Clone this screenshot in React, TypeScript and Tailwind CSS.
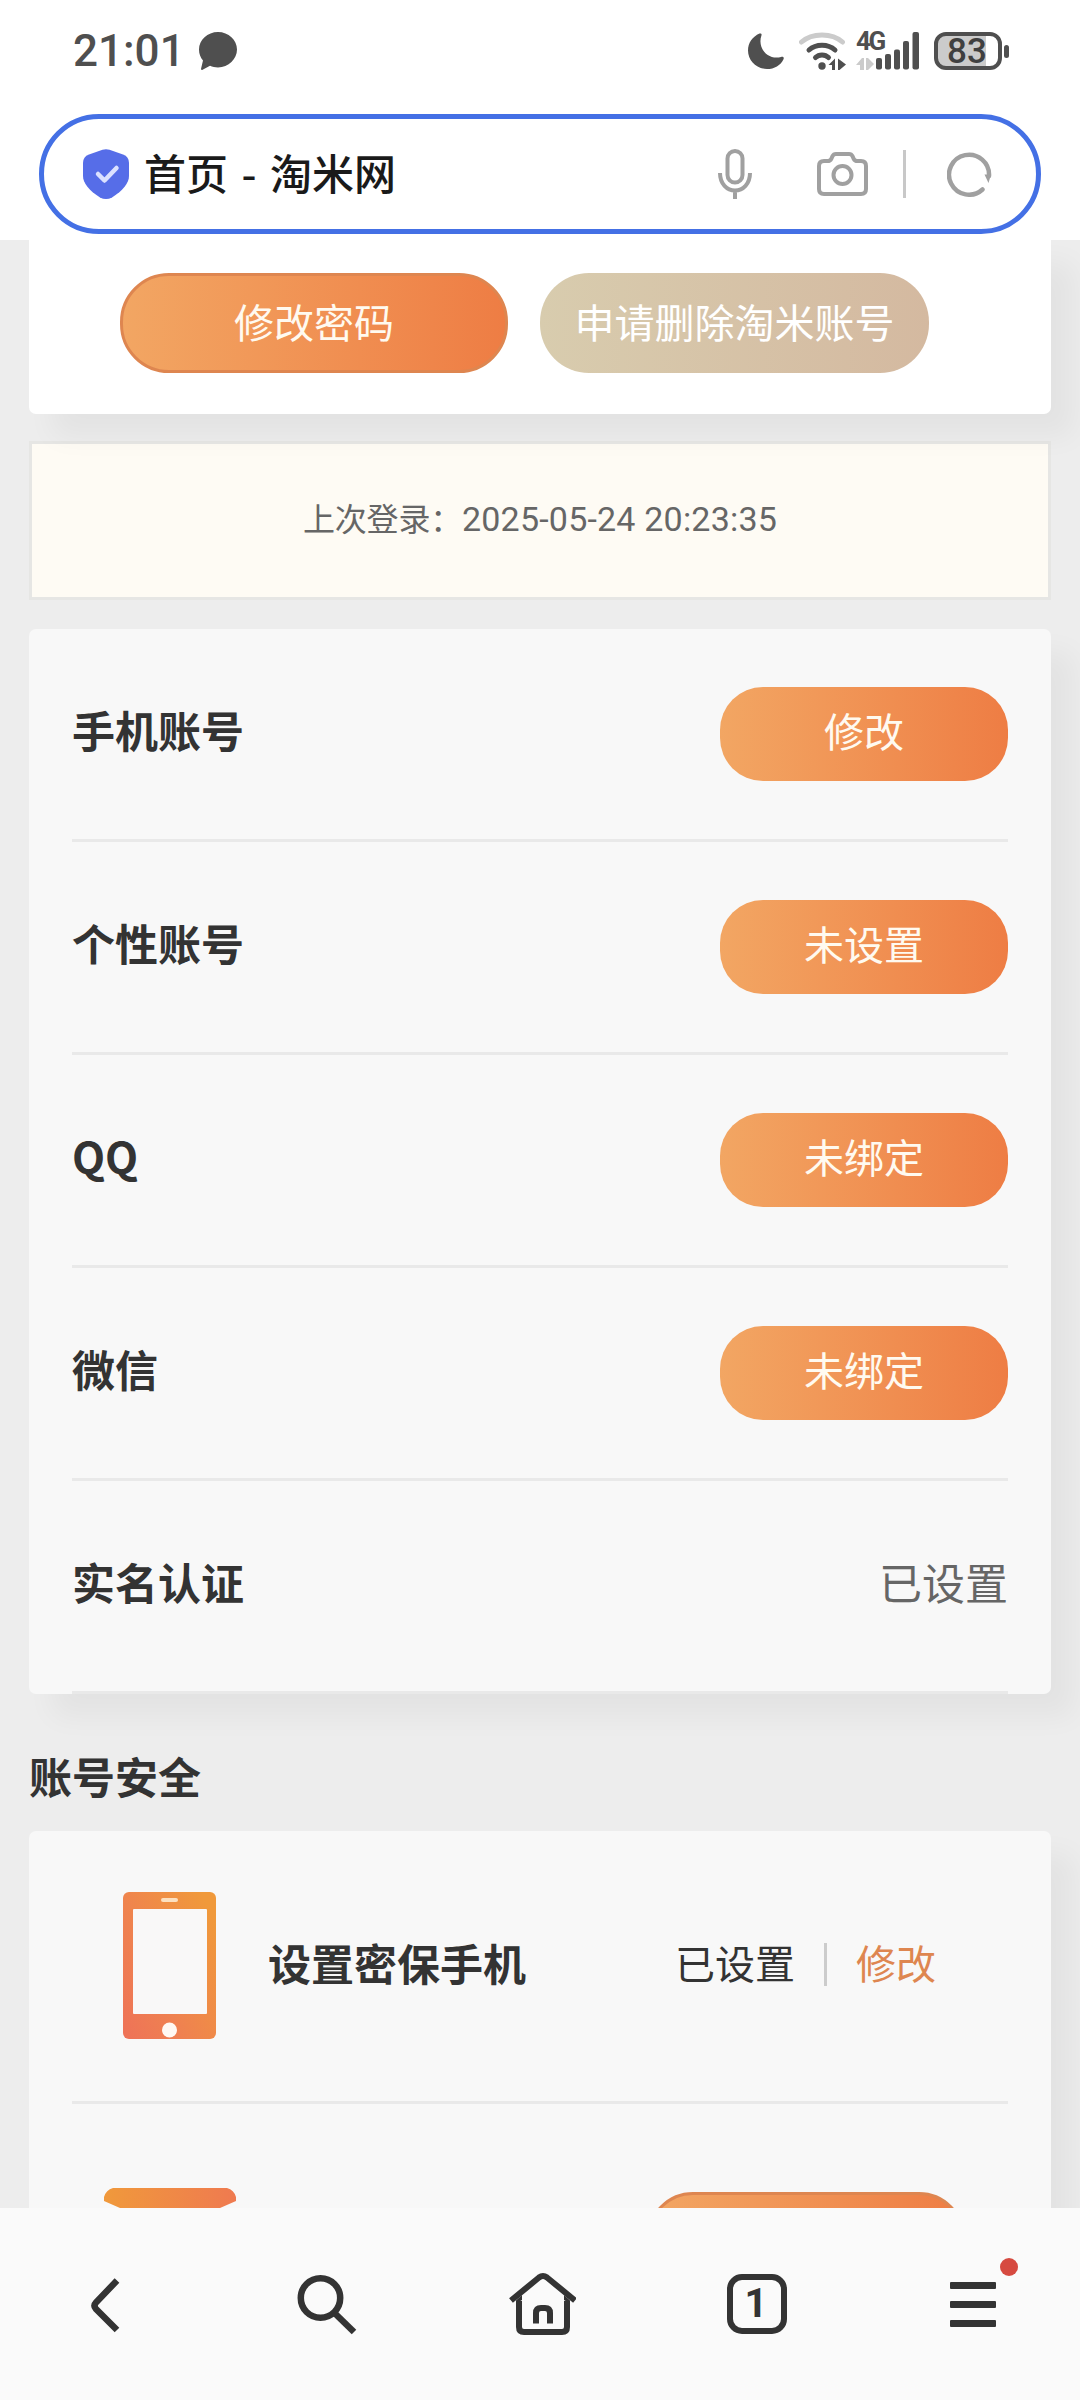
import type { ReactNode } from "react"
import clsx from "clsx"

type AccountRow = {
    label: string
    action?: string
    status?: string
}

const ACCOUNT_ROWS: AccountRow[] = [
    { label: "手机账号", action: "修改" },
    { label: "个性账号", action: "未设置" },
    { label: "QQ", action: "未绑定" },
    { label: "微信", action: "未绑定" },
    { label: "实名认证", status: "已设置" },
]

const CARD_SHADOW = "shadow-[23px_23px_29px_rgba(0,0,0,0.045)]"

const StatusBar = () => (
    <div className="flex h-[102px] items-center pl-[73px] pr-[71px] text-[#4f4f4f]">
        <span className="font-['Roboto'] text-[44px] font-medium leading-none">21:01</span>
        <svg className="ml-[14px] h-[38px] w-[38px]" viewBox="0 0 38 38" fill="currentColor">
            <path d="M19 0C29.500 0 38 8 38 17.500S29.500 35.500 19 35.500c-3 0-5.500-.6-8-1.700L3.600 37.700c-1 .5-1.800-.1-1.500-1.200L4 28.500C1.500 25.500 0 22 0 17.500 0 8 8.500 0 19 0Z" />
        </svg>

        {/* Moon */}
        <svg className="ml-auto h-9 w-9" viewBox="0 0 36 36" fill="currentColor">
            <path d="M11.500.6C12.800 0 14 1 13.500 2.300 9 14.500 19.500 27.500 33 24c2-.5 3.300.5 2.500 2.200C32.500 32.500 26.500 36 19 36 8.500 36 0 27.700 0 17.500 0 10 4.500 3.800 11.500.6Z" />
        </svg>

        {/* Wifi */}
        <svg className="ml-[15px] h-[38px] w-[47px]" viewBox="0 0 47 38" fill="none" strokeWidth="5" strokeLinecap="round">
            <path d="M2.500 10C13 .5 33 .5 43.500 10" stroke="#cbcbcb" />
            <path d="M10 18c7-6.500 19-6.500 26 0" stroke="currentColor" />
            <path d="M16.500 25.500c3.500-3.500 9.500-3.500 13 0" stroke="currentColor" />
            <circle cx="23" cy="34" r="3.700" fill="currentColor" />
            <path d="M29.500 33 36 26.500V38h-3v-5ZM39 26.500l8 6-6.500 5.500H39Z" fill="currentColor" />
        </svg>

        {/* 4G + signal */}
        <div className="ml-2.5 flex h-[38px] w-[64px] items-end">
            <div className="flex h-full w-[20px] flex-col justify-between">
                <span className="w-[30px] font-['Roboto'] text-[26px] font-bold leading-[19px] tracking-[-2.500px]">4G</span>
                <svg className="h-3 w-[18px]" viewBox="0 0 18 12" fill="#cbcbcb">
                    <path d="M0 7 6 0h2v12H4V7ZM10 0h2l6 6-6 6h-2Z" />
                </svg>
            </div>
            <svg className="h-[38px] w-[44px]" viewBox="0 0 44 38" fill="currentColor">
                <rect x="0" y="26" width="6" height="11.500" rx="2" />
                <rect x="9" y="22" width="6" height="15.500" rx="2" />
                <rect x="18" y="17.500" width="6" height="20" rx="2" />
                <rect x="27" y="9" width="6" height="28.500" rx="2" />
                <rect x="36.500" y="0" width="6.500" height="37.500" rx="2" />
            </svg>
        </div>

        {/* Battery */}
        <div className="ml-3.5 flex items-center gap-0.5">
            <div className="flex h-[38px] w-[68px] items-center justify-center rounded-[12px] border-4 border-[#4f4f4f] bg-linear-to-r from-[#cbcbcb] from-80% to-white to-80%">
                <span className="pr-0.5 font-['Roboto'] text-[35px] font-medium leading-none text-[#404040]">83</span>
            </div>
            <div className="h-[13px] w-[5px] rounded-sm bg-[#4f4f4f]" />
        </div>
    </div>
)

const AddressBar = () => (
    <div className="mx-[39px] mt-3 flex h-[120px] items-center rounded-full border-[5px] border-[#4470e5] bg-white pl-[39px] pr-[44px] text-[#a0a0a0]">
        <svg className="h-[50px] w-[46px]" viewBox="0 0 46 50">
            <path d="M19.500.8q3.500-1.200 7 0L40 5.500q6 2.200 6 8.500V27c0 7-6 14.500-17 21.500q-6 3-12 0C6 41.500 0 34 0 27V14Q0 7.700 6 5.500Z" fill="#566de8" />
            <path d="m15 25 6.500 6.500L33.500 19" fill="none" stroke="#dbe1ff" strokeWidth="4.500" strokeLinecap="round" strokeLinejoin="round" />
        </svg>
        <span className="ml-[15px] pb-1 text-[42px] font-medium leading-none text-[#1a1a1a] [word-spacing:4px]">首页 - 淘米网</span>

        <svg className="ml-auto h-[50px] w-[34px]" viewBox="0 0 34 50" fill="none" stroke="currentColor" strokeWidth="4">
            <rect x="9.500" y="2" width="15" height="31.500" rx="7.500" />
            <path d="M2 24c0 11 7 17.500 15 17.500S32 35 32 24M17 41.500V50" />
        </svg>
        <svg className="ml-[65px] h-[44px] w-[51px]" viewBox="0 0 51 44" fill="none" stroke="currentColor" strokeWidth="4" strokeLinejoin="round">
            <path d="M7 9h3.500c2 0 3-.5 3.800-2.200l1.200-2.600C16.300 2.500 17.300 2 19 2h13c1.700 0 2.700.5 3.500 2.200l1.200 2.600C37.500 8.500 38.500 9 40.500 9H44q5 0 5 5v23q0 5-5 5H7q-5 0-5-5V14q0-5 5-5Z" />
            <circle cx="25.500" cy="23" r="9" />
        </svg>
        <div className="ml-[35px] h-12 w-[3px] bg-[#c8c8c8]" />
        <svg className="ml-[41px] h-[45px] w-[45px]" viewBox="0 0 45 45" fill="none" stroke="currentColor" strokeWidth="4.500">
            <path d="M35.500 37.500A20 20 0 1 1 42 24" strokeLinecap="round" />
            <path d="M37.500 22.500h6.500l-2.500 8.500Z" fill="currentColor" stroke="none" />
        </svg>
    </div>
)

const PillButton = ({ children, className }: { children?: ReactNode; className?: string }) => (
    <button
        className={clsx(
            "flex items-center justify-center bg-linear-to-r from-[#f2a663] to-[#ee7d44] text-[40px] leading-none text-[#fffaf0]",
            className,
        )}
    >
        {children}
    </button>
)

const AccountItem = ({ row }: { row: AccountRow }) => (
    <li className="flex h-[213px] items-center justify-between border-b-[3px] border-[#e9e9e9]">
        <span className="pb-2.5 text-[43px] font-bold leading-none text-[#333]">{row.label}</span>
        {row.action ? (
            <PillButton className="h-[94px] w-[288px] rounded-[43px] pb-2">{row.action}</PillButton>
        ) : (
            <span className="pb-2.5 text-[43px] leading-none text-[#666]">{row.status}</span>
        )}
    </li>
)

const PhoneIcon = () => (
    <svg className="mb-px h-[147px] w-[93px]" viewBox="0 0 93 147">
        <defs>
            <linearGradient id="phone" x1="0" y1="1" x2="1" y2="0.200">
                <stop offset="0" stopColor="#ee7258" />
                <stop offset="0.400" stopColor="#ef8150" />
                <stop offset="1" stopColor="#f0993b" />
            </linearGradient>
        </defs>
        <rect width="93" height="147" rx="6" fill="url(#phone)" />
        <rect x="10" y="17" width="74" height="105" rx="1" fill="#f9f8f8" />
        <rect x="38" y="6" width="17" height="4" rx="2" fill="#fce0c0" />
        <circle cx="46.500" cy="138" r="7.500" fill="#fff8f2" />
    </svg>
)

const SecurityCard = () => (
    <section className={clsx("mt-[26px] rounded-[7px] bg-[#f8f8f8] px-[43px]", CARD_SHADOW)}>
        <div className="flex h-[273px] items-center border-b-[3px] border-[#e9e9e9] pl-[51px] pr-[72px]">
            <PhoneIcon />
            <span className="ml-[52px] pb-2 text-[43px] font-bold leading-none text-[#333]">设置密保手机</span>
            <span className="ml-auto pb-2 text-[40px] leading-none text-[#333]">已设置</span>
            <span className="mb-1 ml-[29px] mr-[29px] h-[43px] w-[3px] bg-[#ccc]" />
            <span className="pb-2 text-[40px] leading-none text-[#de8650]">修改</span>
        </div>
        {/* Next item, cut off by the bottom toolbar */}
        <div className="flex h-[273px] items-start justify-between pl-8 pr-[43px] pt-[84px]">
            <svg className="h-[105px] w-[132px]" viewBox="0 0 132 105">
                <defs>
                    <linearGradient id="mail">
                        <stop offset="0" stopColor="#f0993b" />
                        <stop offset="1" stopColor="#ef7a50" />
                    </linearGradient>
                </defs>
                <path d="M9 0h114q7 2 9 9v4l-16 7-50 28L16 20 0 13V9Q2 2 9 0Z" fill="url(#mail)" />
            </svg>
            <PillButton className="mt-1 h-[100px] w-[318px] rounded-[46px] border-[3px] border-[#de8650]" />
        </div>
    </section>
)

const BottomNav = () => (
    <nav className="grid h-[192px] shrink-0 grid-cols-5 place-items-center bg-[#fafafa] text-[#333]">
        <svg className="size-[72px]" viewBox="0 0 72 72" fill="none" stroke="currentColor" strokeWidth="6.500">
            <path d="M45 12.500 24 34.500q-3 3.200 0 6.500l21 21" />
        </svg>
        <svg className="size-[72px]" viewBox="0 0 72 72" fill="none" stroke="currentColor" strokeWidth="6.500">
            <circle cx="32.500" cy="30" r="19.700" />
            <path d="M46 44.500 66 64" />
        </svg>
        <svg className="size-[72px]" viewBox="0 0 72 72" fill="none" stroke="currentColor" strokeWidth="6">
            <path d="M7 32.500 35 9.500q4-3 8 0l28 23" />
            <path d="M32 55.500V45q0-5 5-5h4q5 0 5 5v10.500" />
            <path d="M15 33v26q0 5 5 5h38q5 0 5-5V33" />
            <path d="M12 35.500v-3L18 27v5ZM66 35.500v-3L60 27v5Z" fill="currentColor" stroke="none" />
        </svg>
        <div className="ml-0.5 flex size-[60px] items-center justify-center rounded-[15px] border-[6px] border-[#333]">
            <span className="pr-0.5 font-['Roboto'] text-[40px] font-bold leading-none">1</span>
        </div>
        <div className="relative ml-0.5 flex w-[46px] flex-col gap-3">
            <span className="h-[7px] rounded-[1px] bg-[#333]" />
            <span className="h-[7px] rounded-[1px] bg-[#333]" />
            <span className="h-[7px] rounded-[1px] bg-[#333]" />
            <span className="absolute -right-[22px] -top-[24px] size-[18px] rounded-full bg-[#d64a40]" />
        </div>
    </nav>
)

export default function App() {
    return (
        <div className="flex h-[2400px] w-[1080px] flex-col overflow-hidden bg-[#ededed] font-['Noto_Sans_CJK_SC',sans-serif]">
            <header className="h-[240px] shrink-0 bg-white">
                <StatusBar />
                <AddressBar />
            </header>

            <main className="min-h-0 flex-1 overflow-hidden px-[29px]">
                <section className={clsx("relative z-10 flex h-[174px] gap-8 rounded-b-[7px] bg-white pl-[91px] pt-[33px]", CARD_SHADOW)}>
                    <PillButton className="h-[100px] w-[388px] rounded-[49px] border-[3px] border-[#de8650] pb-1">修改密码</PillButton>
                    <button className="flex h-[100px] w-[389px] items-center justify-center rounded-[49px] bg-linear-to-r from-[#d8ccae] to-[#d4b9a0] pb-1 text-[40px] leading-none text-white">
                        申请删除淘米账号
                    </button>
                </section>

                <div className="mt-[27px] flex h-[159px] items-center justify-center border-[3px] border-[#e6e6e4] bg-[#fefbf4] text-[#666]">
                    <span className="pb-2 text-[32px] leading-none tracking-[-0.2px]">上次登录：</span>
                    <span className="pb-1 font-['Roboto'] text-[34px] leading-none tracking-[0.2px]">2025-05-24 20:23:35</span>
                </div>

                <ul className={clsx("mt-[29px] rounded-[7px] bg-[#f8f8f8] px-[43px]", CARD_SHADOW)}>
                    {ACCOUNT_ROWS.map((row) => (
                        <AccountItem key={row.label} row={row} />
                    ))}
                </ul>

                <h2 className="mt-[61px] h-[50px] text-[43px] font-bold leading-[41px] text-[#333]">账号安全</h2>
                <SecurityCard />
            </main>

            <BottomNav />
        </div>
    )
}
